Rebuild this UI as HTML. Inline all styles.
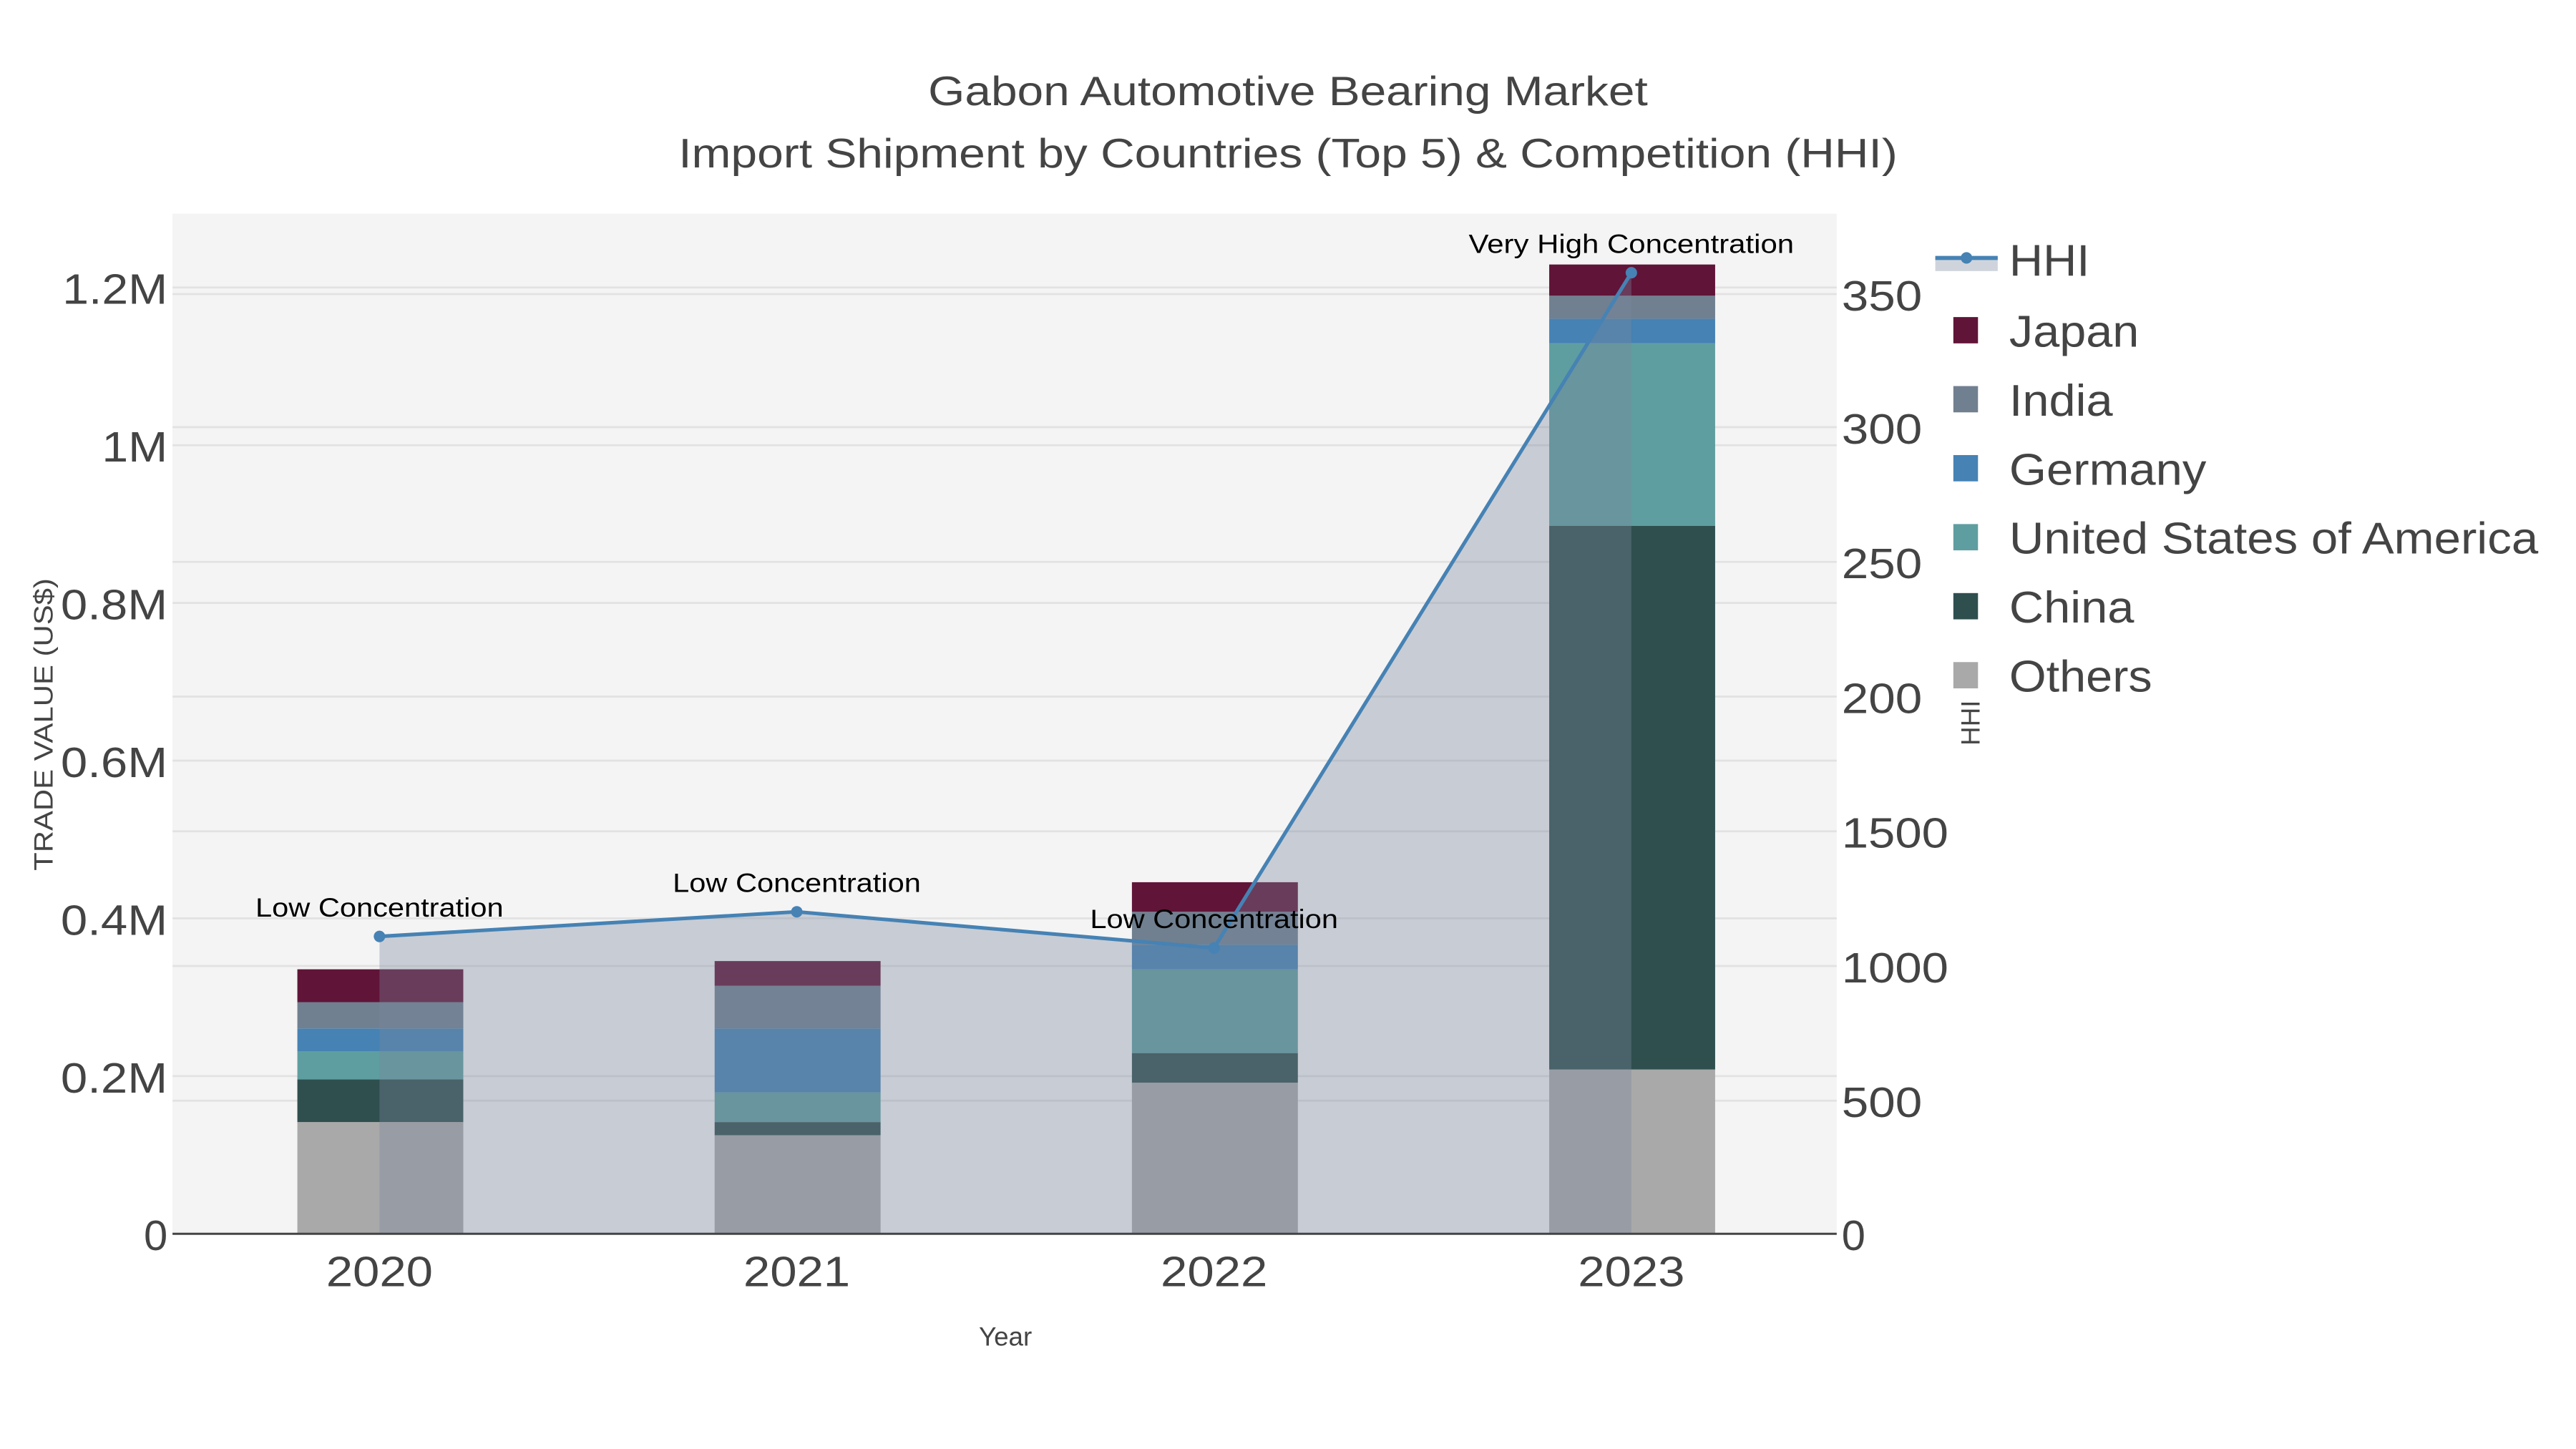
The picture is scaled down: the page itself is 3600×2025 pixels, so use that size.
<!DOCTYPE html>
<html><head><meta charset="utf-8"><style>
html,body{margin:0;padding:0;background:#fff;}
svg{display:block;}
text{font-family:"Liberation Sans",sans-serif;}
</style></head><body>
<svg width="3600" height="2025" viewBox="0 0 1568 882" xmlns="http://www.w3.org/2000/svg">
<rect width="1568" height="882" fill="#fff"/>
<rect x="105" y="130" width="1013" height="621" fill="#f4f4f4"/>
<g stroke="#e2e2e2" stroke-width="1.2">
<line x1="105" x2="1118" y1="655" y2="655"/><line x1="105" x2="1118" y1="559" y2="559"/>
<line x1="105" x2="1118" y1="463" y2="463"/><line x1="105" x2="1118" y1="367" y2="367"/>
<line x1="105" x2="1118" y1="271" y2="271"/><line x1="105" x2="1118" y1="175" y2="175"/>
<line x1="105" x2="1118" y1="670" y2="670"/><line x1="105" x2="1118" y1="588" y2="588"/>
<line x1="105" x2="1118" y1="506" y2="506"/><line x1="105" x2="1118" y1="424" y2="424"/>
<line x1="105" x2="1118" y1="342" y2="342"/><line x1="105" x2="1118" y1="260" y2="260"/>
<line x1="105" x2="1118" y1="179" y2="179"/>
</g>
<g>
<rect x="181" y="683" width="101" height="68" fill="#a9a9a9"/>
<rect x="181" y="657" width="101" height="26" fill="#2f4f4f"/>
<rect x="181" y="640" width="101" height="17" fill="#5f9ea0"/>
<rect x="181" y="626" width="101" height="14" fill="#4682b4"/>
<rect x="181" y="610" width="101" height="16" fill="#708090"/>
<rect x="181" y="590" width="101" height="20" fill="#601438"/>

<rect x="435" y="691" width="101" height="60" fill="#a9a9a9"/>
<rect x="435" y="683" width="101" height="8" fill="#2f4f4f"/>
<rect x="435" y="665" width="101" height="18" fill="#5f9ea0"/>
<rect x="435" y="626" width="101" height="39" fill="#4682b4"/>
<rect x="435" y="600" width="101" height="26" fill="#708090"/>
<rect x="435" y="585" width="101" height="15" fill="#601438"/>

<rect x="689" y="659" width="101" height="92" fill="#a9a9a9"/>
<rect x="689" y="641" width="101" height="18" fill="#2f4f4f"/>
<rect x="689" y="590" width="101" height="51" fill="#5f9ea0"/>
<rect x="689" y="575" width="101" height="15" fill="#4682b4"/>
<rect x="689" y="555" width="101" height="20" fill="#708090"/>
<rect x="689" y="537" width="101" height="18" fill="#601438"/>

<rect x="943" y="651" width="101" height="100" fill="#a9a9a9"/>
<rect x="943" y="320" width="101" height="331" fill="#2f4f4f"/>
<rect x="943" y="209" width="101" height="111" fill="#5f9ea0"/>
<rect x="943" y="194" width="101" height="15" fill="#4682b4"/>
<rect x="943" y="180" width="101" height="14" fill="#708090"/>
<rect x="943" y="161" width="101" height="19" fill="#601438"/>
</g>
<path d="M231,751 L231,570 L485,555 L739,577 L993,166 L993,751 Z" fill="rgb(122,133,155)" fill-opacity="0.36"/>
<polyline points="231,570 485,555 739,577 993,166" fill="none" stroke="#4682b4" stroke-width="2.2"/>
<g fill="#4682b4"><circle cx="231" cy="570" r="3.5"/><circle cx="485" cy="555" r="3.5"/><circle cx="739" cy="577" r="3.5"/><circle cx="993" cy="166" r="3.5"/></g>
<line x1="105" x2="1118" y1="751" y2="751" stroke="#444" stroke-width="1.3"/>
<g font-size="16" fill="#000" text-anchor="middle">
<text x="231" y="558" textLength="151" lengthAdjust="spacingAndGlyphs">Low Concentration</text>
<text x="485" y="543" textLength="151" lengthAdjust="spacingAndGlyphs">Low Concentration</text>
<text x="739" y="565" textLength="151" lengthAdjust="spacingAndGlyphs">Low Concentration</text>
<text x="993" y="154" textLength="198" lengthAdjust="spacingAndGlyphs">Very High Concentration</text>
</g>
<g fill="#444" text-anchor="middle" font-size="25">
<text x="784" y="64" textLength="438" lengthAdjust="spacingAndGlyphs">Gabon Automotive Bearing Market</text>
<text x="784" y="102" textLength="742" lengthAdjust="spacingAndGlyphs">Import Shipment by Countries (Top 5) &amp; Competition (HHI)</text>
</g>
<g fill="#444" font-size="26" text-anchor="end">
<text x="102" y="761">0</text>
<text x="102" y="665" textLength="65" lengthAdjust="spacingAndGlyphs">0.2M</text>
<text x="102" y="569" textLength="65" lengthAdjust="spacingAndGlyphs">0.4M</text>
<text x="102" y="473" textLength="65" lengthAdjust="spacingAndGlyphs">0.6M</text>
<text x="102" y="377" textLength="65" lengthAdjust="spacingAndGlyphs">0.8M</text>
<text x="102" y="281" textLength="40" lengthAdjust="spacingAndGlyphs">1M</text>
<text x="102" y="185" textLength="64" lengthAdjust="spacingAndGlyphs">1.2M</text>
</g>
<g fill="#444" font-size="26" text-anchor="start">
<text x="1121" y="761">0</text>
<text x="1121" y="680" textLength="49" lengthAdjust="spacingAndGlyphs">500</text>
<text x="1121" y="598" textLength="65" lengthAdjust="spacingAndGlyphs">1000</text>
<text x="1121" y="516" textLength="65" lengthAdjust="spacingAndGlyphs">1500</text>
<text x="1121" y="434" textLength="49" lengthAdjust="spacingAndGlyphs">200</text>
<text x="1121" y="352" textLength="49" lengthAdjust="spacingAndGlyphs">250</text>
<text x="1121" y="270" textLength="49" lengthAdjust="spacingAndGlyphs">300</text>
<text x="1121" y="189" textLength="49" lengthAdjust="spacingAndGlyphs">350</text>
</g>
<g fill="#444" font-size="26" text-anchor="middle">
<text x="231" y="783" textLength="65" lengthAdjust="spacingAndGlyphs">2020</text><text x="485" y="783" textLength="65" lengthAdjust="spacingAndGlyphs">2021</text>
<text x="739" y="783" textLength="65" lengthAdjust="spacingAndGlyphs">2022</text><text x="993" y="783" textLength="65" lengthAdjust="spacingAndGlyphs">2023</text>
</g>
<text x="612" y="819" fill="#444" font-size="16" text-anchor="middle">Year</text>
<text transform="translate(32,441) rotate(-90)" fill="#444" font-size="16" text-anchor="middle" textLength="178" lengthAdjust="spacingAndGlyphs">TRADE VALUE (US$)</text>
<text transform="translate(1205,440) rotate(-90)" fill="#444" font-size="16" text-anchor="middle">HHI</text>
<rect x="1178" y="156" width="38" height="9" fill="#cfd4dc"/>
<line x1="1178" x2="1216" y1="157" y2="157" stroke="#4682b4" stroke-width="2.5"/>
<circle cx="1197" cy="157" r="3.5" fill="#4682b4"/>
<g fill="#444" font-size="27">
<text x="1223" y="168" textLength="49" lengthAdjust="spacingAndGlyphs">HHI</text>
<text x="1223" y="211" textLength="79" lengthAdjust="spacingAndGlyphs">Japan</text>
<text x="1223" y="253" textLength="63" lengthAdjust="spacingAndGlyphs">India</text>
<text x="1223" y="295" textLength="120" lengthAdjust="spacingAndGlyphs">Germany</text>
<text x="1223" y="337" textLength="322" lengthAdjust="spacingAndGlyphs">United States of America</text>
<text x="1223" y="379" textLength="76" lengthAdjust="spacingAndGlyphs">China</text>
<text x="1223" y="421" textLength="87" lengthAdjust="spacingAndGlyphs">Others</text>
</g>
<rect x="1189" y="193" width="15" height="16" fill="#601438"/>
<rect x="1189" y="235" width="15" height="16" fill="#708090"/>
<rect x="1189" y="277" width="15" height="16" fill="#4682b4"/>
<rect x="1189" y="319" width="15" height="16" fill="#5f9ea0"/>
<rect x="1189" y="361" width="15" height="16" fill="#2f4f4f"/>
<rect x="1189" y="403" width="15" height="16" fill="#a9a9a9"/>
</svg>
</body></html>
